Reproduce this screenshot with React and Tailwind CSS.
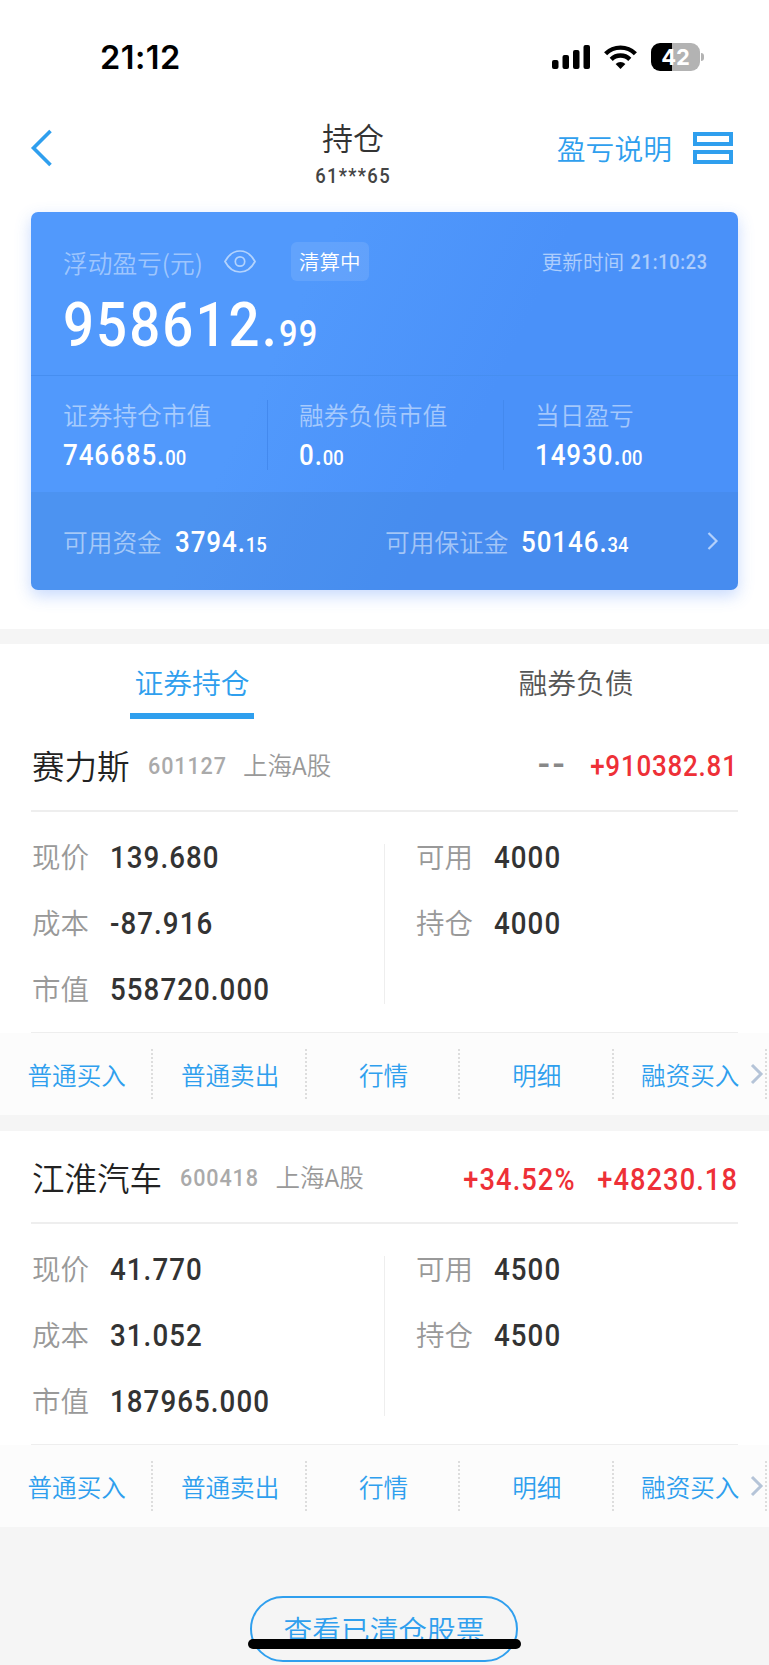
import React, { useState } from 'react';

const holdings = [
  {
    name: '赛力斯',
    code: '601127',
    market: '上海A股',
    percent: '--',
    profit: '+910382.81',
    price: '139.680',
    cost: '-87.916',
    value: '558720.000',
    usable: '4000',
    total: '4000',
  },
  {
    name: '江淮汽车',
    code: '600418',
    market: '上海A股',
    percent: '+34.52%',
    profit: '+48230.18',
    price: '41.770',
    cost: '31.052',
    value: '187965.000',
    usable: '4500',
    total: '4500',
  },
];

const actions = ['普通买入', '普通卖出', '行情', '明细', '融资买入'];

function StatusBar() {
  return (
    <div className="flex h-[114px] items-center justify-between pl-[100px] pr-[65px]">
      <span className="pt-0.5 font-['Inter'] text-[32.5px] font-semibold leading-none tracking-[0.5px] text-black">21:12</span>
      <div className="flex items-center gap-[14px]">
        <svg className="h-6 w-[38px]" viewBox="0 0 38 24" fill="#000">
          <rect x="0" y="15" width="6.5" height="9" rx="2" />
          <rect x="10.5" y="10" width="6.5" height="14" rx="2" />
          <rect x="21" y="5" width="6.5" height="19" rx="2" />
          <rect x="31.5" y="0" width="6.5" height="24" rx="2" />
        </svg>
        <svg className="h-6 w-[33px]" viewBox="0 0 33 24" fill="none" stroke="#000" strokeWidth="4.4">
          <path d="M1.6 8.7a21.2 21.2 0 0 1 29.8 0" />
          <path d="M7.2 14.4a13.2 13.2 0 0 1 18.6 0" />
          <path d="M16.5 24l-4.9-5a7 7 0 0 1 9.8 0z" fill="#000" stroke="none" />
        </svg>
        <div className="flex items-center gap-px">
          <div className="flex h-7 w-[49px] items-center justify-center rounded-[9px] bg-[linear-gradient(to_right,#000_43%,#b3b3b3_43%)]">
            <span className="font-['Inter'] text-[22px] font-bold leading-none text-white">42</span>
          </div>
          <div className="h-2 w-[3px] rounded-r-full bg-[#b3b3b3]" />
        </div>
      </div>
    </div>
  );
}

function Header() {
  return (
    <header className="flex h-[98px] items-start">
      <div className="w-[220px] pl-[30px] pt-[15px]">
        <svg className="h-[38px] w-[22px]" viewBox="0 0 22 38" fill="none" stroke="#2f9fee" strokeWidth="3.6">
          <path d="M20.5 2L3.500 19l17 17" />
        </svg>
      </div>
      <div className="flex w-[266px] flex-col items-center pt-[4px]">
        <h1 className="text-[31px] font-[350] leading-[38px] text-[#333]">持仓</h1>
        <span className="mt-[9px] inline-block scale-x-[0.88] font-['Roboto'] text-[21px] font-medium leading-[22px] tracking-[1.5px] text-[#444]">
          61***65
        </span>
      </div>
      <div className="flex flex-1 items-center justify-end gap-[21px] pr-9 pt-[15px]">
        <span className="text-[28.8px] font-[350] leading-[38px] text-[#2f9fee]">盈亏说明</span>
        <div className="flex flex-col gap-1">
          <div className="h-[14px] w-10 border-4 border-[#2f9fee]" />
          <div className="h-[14px] w-10 border-4 border-[#2f9fee]" />
        </div>
      </div>
    </header>
  );
}

function Amount({ value }) {
  const [whole, cents] = value.split('.');
  return (
    <span className="inline-block origin-left scale-x-[0.88] font-['Roboto'] text-[29.5px] font-medium leading-8 tracking-[1.05px] text-white">
      {whole}.<span className="text-[21px] tracking-[0px]">{cents}</span>
    </span>
  );
}

function Stat({ label, value }) {
  return (
    <div className="flex flex-col">
      <span className="text-[24.7px] font-[350] leading-8 text-white/50">{label}</span>
      <span className="mt-[9px] flex">
        <Amount value={value} />
      </span>
    </div>
  );
}

function Summary() {
  return (
    <section className="mx-[31px] flex h-[378px] flex-col overflow-hidden rounded-[7px] bg-[linear-gradient(115deg,#5199fc_35%,#4a91f9_62%)] shadow-[0_6px_16px_rgba(72,133,248,0.3)]">
      <div className="h-[164px] border-b border-[#468ef0] pl-8 pr-[30px] pt-[30px]">
        <div className="flex h-[39px] items-center">
          <span className="flex pt-0.5 text-[24.7px] font-[350] text-white/45">
            浮动盈亏<span>(</span>元<span>)</span>
          </span>
          <svg className="ml-[21px] h-[23px] w-8" viewBox="0 0 32 23" fill="none" stroke="#b3d3fd" strokeWidth="1.7">
            <path d="M1 11.5C5 4 10 1 16 1s11 3 15 10.500C27 19 22 22 16 22S5 19 1 11.500z" />
            <circle cx="16" cy="11.500" r="4.700" />
          </svg>
          <span className="ml-[35px] flex h-[39px] w-[78px] items-center justify-center rounded-md bg-white/10 text-[20.5px] font-[350] text-white">
            清算中
          </span>
          <span className="ml-auto flex items-center text-[20.6px] font-[350] text-white/55">
            更新时间
            <span className="-ml-[4px] inline-block origin-right scale-x-[0.88] pt-0.5 font-['Roboto'] text-[20.5px] font-medium tracking-[0.9px]">
              21:10:23
            </span>
          </span>
        </div>
        <div className="mt-[10px] w-fit origin-left scale-x-[0.88] font-['Roboto'] text-[62px] font-medium leading-[68px] tracking-[2.4px] text-white">
          958612.<span className="text-[37px] tracking-[1.4px]">99</span>
        </div>
      </div>
      <div className="flex h-[116px] items-start pt-[24px]">
        <div className="h-[70px] w-[237px] border-r border-[#4389ee] pl-8">
          <div className="-mt-0.5">
            <Stat label="证券持仓市值" value="746685.00" />
          </div>
        </div>
        <div className="h-[70px] w-[236px] border-r border-[#4389ee] pl-[31px]">
          <div className="-mt-0.5">
            <Stat label="融券负债市值" value="0.00" />
          </div>
        </div>
        <div className="-mt-0.5 pl-[31px]">
          <Stat label="当日盈亏" value="14930.00" />
        </div>
      </div>
      <div className="flex flex-1 items-center bg-[#346fb4]/15 pl-8 pr-[19px]">
        <div className="flex w-[322px] items-center gap-[13px]">
          <span className="pt-px text-[24.7px] font-[350] text-white/50">可用资金</span>
          <span className="flex pt-[5px]">
            <Amount value="3794.15" />
          </span>
        </div>
        <div className="flex flex-1 items-center gap-[13px]">
          <span className="pt-px text-[24.7px] font-[350] text-white/50">可用保证金</span>
          <span className="flex pt-[5px]">
            <Amount value="50146.34" />
          </span>
        </div>
        <svg className="h-[18px] w-3" viewBox="0 0 12 18" fill="none" stroke="#b3d0fb" strokeWidth="2.200">
          <path d="M1.500 1l8 8-8 8" />
        </svg>
      </div>
    </section>
  );
}

function Field({ label, value }) {
  return (
    <div className="flex h-[66px] items-center">
      <span className="w-[78px] pb-[5px] text-[28.5px] font-[350] leading-none text-[#999]">{label}</span>
      <span className="inline-block origin-left scale-x-[0.88] pb-0.5 font-['Roboto'] text-[31.5px] font-medium leading-none tracking-[1.2px] text-[#333]">
        {value}
      </span>
    </div>
  );
}

function Holding({ item, compact }) {
  return (
    <article className="bg-white">
      <div className="h-[92px] px-[31px]">
        <div className="flex h-full items-center border-b-2 border-[#eee] pl-px">
          <span className="text-[32.5px] font-[350] leading-none text-[#222]">{item.name}</span>
          <span className="ml-[18px] inline-block origin-left scale-x-[0.88] pt-[3px] font-['Roboto'] text-[24.5px] font-medium leading-none tracking-[1px] text-[#aaa]">
            {item.code}
          </span>
          <span className="ml-[6px] text-[24.5px] font-[350] leading-none text-[#999]">{item.market}</span>
          {item.percent === '--' ? (
            <span className="ml-auto font-['Roboto'] text-[36px] font-medium leading-none tracking-[2.5px] text-[#888]">{item.percent}</span>
          ) : (
            <span className="ml-auto inline-block origin-right scale-x-[0.88] pt-1 font-['Roboto'] text-[31px] font-medium leading-none tracking-[1.2px] text-[#ee3037]">
              {item.percent}
            </span>
          )}
          <span
            className={
              compact
                ? "ml-[3px] inline-block origin-right scale-x-[0.88] pt-1 font-['Roboto'] text-[29.5px] font-medium leading-none tracking-[0.9px] text-[#ee3037]"
                : "ml-[3px] inline-block origin-right scale-x-[0.88] pt-1 font-['Roboto'] text-[31px] font-medium leading-none tracking-[1.2px] text-[#ee3037]"
            }
          >
            {item.profit}
          </span>
        </div>
      </div>
      <div className="px-[31px]">
        <div className="flex h-[221px] border-b border-[#eee] pt-[14px]">
          <div className="w-[353px] pl-px">
            <Field label="现价" value={item.price} />
            <Field label="成本" value={item.cost} />
            <Field label="市值" value={item.value} />
          </div>
          <div className="mt-[18px] h-[160px] w-px bg-[#eee]" />
          <div className="pl-[31px]">
            <Field label="可用" value={item.usable} />
            <Field label="持仓" value={item.total} />
          </div>
        </div>
      </div>
      <div className="relative flex h-[82px] items-center bg-[#fcfcfc]">
        {actions.map((action) => (
          <button
            key={action}
            className="h-[50px] w-[153.4px] shrink-0 border-r-2 border-dotted border-[#ddd] pl-0.5 text-[24.6px] font-[350] text-[#2f9fee]"
          >
            {action}
          </button>
        ))}
        <svg className="absolute right-[5px] top-[30px] h-[22px] w-[14px]" viewBox="0 0 14 22" fill="none" stroke="#b5c4d8" strokeWidth="3">
          <path d="M2 2l9 9-9 9" />
        </svg>
      </div>
    </article>
  );
}

export default function App() {
  const [tab, setTab] = useState('证券持仓');

  return (
    <main className="relative h-[1665px] w-[769px] overflow-hidden bg-[#f5f5f5] font-['Noto_Sans_CJK_SC',sans-serif]">
      <div className="h-[629px] bg-white">
        <StatusBar />
        <Header />
        <Summary />
      </div>
      <nav className="mt-[15px] grid h-[76px] grid-cols-2 bg-white pr-px">
        {['证券持仓', '融券负债'].map((label) => (
          <button key={label} onClick={() => setTab(label)} className="flex flex-col items-center pt-[17px]">
            <span
              className={
                tab === label
                  ? 'text-[28.8px] font-[350] leading-[42px] text-[#2f9fee]'
                  : 'text-[28.8px] font-[350] leading-[42px] text-[#555]'
              }
            >
              {label}
            </span>
            {tab === label && <span className="mt-[10px] h-1.5 w-[124px] bg-[#2f9fee]" />}
          </button>
        ))}
      </nav>
      <div className="flex flex-col">
        <Holding item={holdings[0]} compact />
        <div className="mt-4 bg-white pt-[1px]">
          <Holding item={holdings[1]} />
        </div>
      </div>
      <div className="flex justify-center pr-px pt-[69px]">
        <button className="h-[66px] w-[268px] rounded-full border-2 border-[#2f9fee] text-[28.7px] font-[350] text-[#2f9fee]">
          查看已清仓股票
        </button>
      </div>
      <div className="absolute bottom-4 left-[248px] h-[10px] w-[273px] rounded-full bg-black" />
    </main>
  );
}
